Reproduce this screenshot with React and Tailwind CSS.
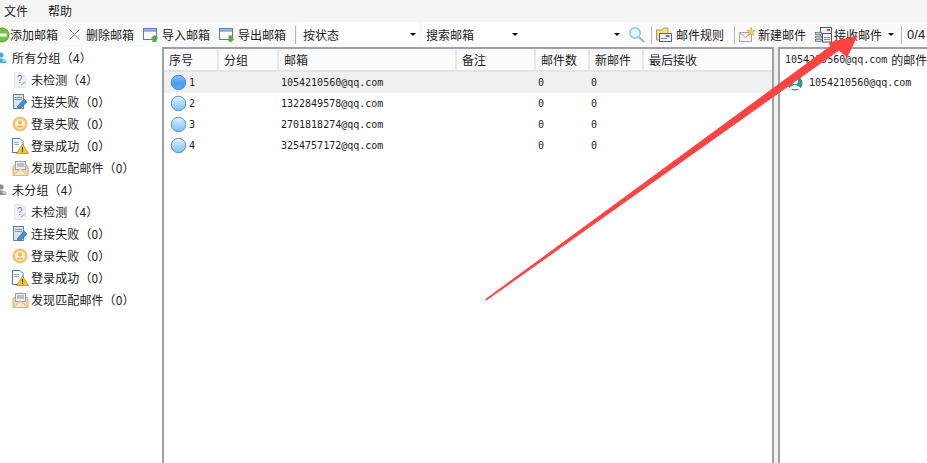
const Circle = ({ active }) => (
  <svg width="17" height="17" viewBox="0 0 17 17" className="shrink-0">
    <defs>
      <linearGradient id={active ? "ba" : "bn"} x1="0" y1="0" x2="0" y2="1">
        <stop offset="0" stopColor={active ? "#8cc4f8" : "#e6f4fd"} />
        <stop offset="0.55" stopColor={active ? "#4a9ff0" : "#a8d6f6"} />
        <stop offset="1" stopColor={active ? "#5aaaf5" : "#7cc0f0"} />
      </linearGradient>
    </defs>
    <circle cx="8.5" cy="8.5" r="7.2" fill={`url(#${active ? "ba" : "bn"})`} stroke={active ? "#3f88d8" : "#4d93cc"} strokeWidth="1" />
  </svg>
);

const IconAdd = () => (
  <svg width="16" height="16" viewBox="0 0 16 16" className="shrink-0">
    <circle cx="8" cy="8" r="7" fill="#7cc242" stroke="#5b9e2c" />
    <rect x="3.5" y="6.5" width="9" height="3" fill="#fff" />
  </svg>
);
const IconX = () => (
  <svg width="11" height="11" viewBox="0 0 11 11" className="shrink-0">
    <path d="M0.5 0.5 L10.5 10.5 M10.5 0.5 L0.5 10.5" stroke="#8a8a8a" strokeWidth="1" fill="none" />
  </svg>
);
const IconWin = ({ up }) => (
  <svg width="16" height="16" viewBox="0 0 16 16" className="shrink-0">
    <rect x="0.5" y="1.5" width="13" height="11" fill="#fff" stroke="#5a7fae" />
    <rect x="0.5" y="1.5" width="13" height="2.5" fill="#a9c4e4" stroke="#5a7fae" />
    {up ? (
      <path d="M11.5 8 L15.5 11.5 H13.5 V15 H9.5 V11.5 H7.5 Z" fill="#5fa640" />
    ) : (
      <path d="M11.5 15.5 L15.5 12 H13.5 V8.5 H9.5 V12 H7.5 Z" fill="#5fa640" />
    )}
  </svg>
);
const IconSearch = () => (
  <svg width="18" height="18" viewBox="0 0 18 18" className="shrink-0">
    <circle cx="7" cy="7" r="5.2" fill="#e4f4fc" stroke="#8ccbec" strokeWidth="1.6" />
    <path d="M11 11 L16 16" stroke="#a8b4be" strokeWidth="2.2" />
  </svg>
);
const IconRule = () => (
  <svg width="16" height="16" viewBox="0 0 16 16" className="shrink-0">
    <path d="M0.5 3 H6 L7.5 1 H12 V13 H0.5 Z" fill="#f6dc94" stroke="#b89a52" />
    <rect x="3.5" y="6.5" width="12" height="8" fill="#f4f6fa" stroke="#4a6a92" />
    <rect x="10" y="8" width="3.5" height="2" fill="#d84a3a" />
    <rect x="5" y="11" width="6" height="1" fill="#7a8ba0" />
  </svg>
);
const IconNew = () => (
  <svg width="17" height="16" viewBox="0 0 17 16" className="shrink-0">
    <rect x="0.5" y="5.5" width="12" height="9" fill="#f4f4f2" stroke="#a8a8a0" />
    <path d="M0.5 5.5 L6.5 10.5 L12.5 5.5" fill="none" stroke="#a8a8a0" />
    <path d="M12 0.5 L13.3 3.3 L16.3 3.6 L14 5.6 L14.7 8.5 L12 7 L9.3 8.5 L10 5.6 L7.7 3.6 L10.7 3.3 Z" fill="#f0cc60" stroke="#c8a040" strokeWidth="0.5" />
  </svg>
);
const IconRecv = () => (
  <svg width="17" height="16" viewBox="0 0 17 16" className="shrink-0">
    <rect x="5.5" y="0.5" width="11" height="9" fill="#eef1f6" stroke="#4a5a72" />
    <rect x="12" y="2" width="3" height="2" fill="#d84a3a" />
    <rect x="0.5" y="5.5" width="6" height="2" fill="#c8d0dc" stroke="#4a5a72" strokeWidth="0.6" />
    <rect x="0.5" y="9" width="6" height="2" fill="#c8d0dc" stroke="#4a5a72" strokeWidth="0.6" />
    <rect x="0.5" y="12.5" width="6" height="2" fill="#c8d0dc" stroke="#4a5a72" strokeWidth="0.6" />
    <rect x="7.5" y="6.5" width="9" height="8.5" fill="#f6f8fb" stroke="#4a5a72" />
    <rect x="9" y="10" width="6" height="1" fill="#7a8ba0" />
    <rect x="9" y="12" width="6" height="1" fill="#7a8ba0" />
  </svg>
);

const TUnknown = () => (
  <svg width="16" height="16" viewBox="0 0 16 16" className="shrink-0">
    <path d="M2.5 0.5 H10 L13.5 4 V15.5 H2.5 Z" fill="#f0f2f4" stroke="#e4e6e9" />
    <text x="5" y="11" fontSize="10" fontFamily="Liberation Sans" fill="#5a80c8">?</text>
    <path d="M9 13 L13 10" stroke="#b0b4b8" strokeWidth="1.2" />
  </svg>
);
const TFail = () => (
  <svg width="16" height="16" viewBox="0 0 16 16" className="shrink-0">
    <rect x="1.5" y="0.5" width="10" height="14" fill="#dbe3ea" stroke="#6c7e90" />
    <rect x="3" y="3" width="7" height="1" fill="#8697a8" />
    <rect x="3" y="5" width="7" height="1" fill="#8697a8" />
    <path d="M5 13 L12 5 L15 8 L8 15 Z" fill="#3f8fd8" stroke="#2a6aa8" strokeWidth="0.6" />
  </svg>
);
const TUser = () => (
  <svg width="16" height="16" viewBox="0 0 16 16" className="shrink-0">
    <circle cx="8" cy="8" r="7" fill="#f6c676" stroke="#f0b860" />
    <circle cx="8" cy="8" r="5" fill="#fff2d8" />
    <circle cx="8" cy="6.5" r="2" fill="#f2b450" />
    <path d="M4.5 11.5 C5 8.5 11 8.5 11.5 11.5 Z" fill="#f2b450" />
  </svg>
);
const TWarn = () => (
  <svg width="17" height="16" viewBox="0 0 17 16" className="shrink-0">
    <path d="M0.5 0.5 H8 L11 3.5 V14.5 H0.5 Z" fill="#fff" stroke="#3b78c4" />
    <rect x="2" y="4" width="5" height="1" fill="#8ab0de" />
    <rect x="2" y="6" width="5" height="1" fill="#8ab0de" />
    <path d="M10.5 6 L16.5 15.5 H4.5 Z" fill="#f6c230" stroke="#b08820" strokeWidth="0.7" />
    <rect x="10" y="9" width="1" height="3.5" fill="#333" />
    <rect x="10" y="13" width="1" height="1.2" fill="#333" />
  </svg>
);
const TMail = () => (
  <svg width="17" height="16" viewBox="0 0 17 16" className="shrink-0">
    <path d="M1 6.5 L8.5 1 L16 6.5 V15.5 H1 Z" fill="#f7d8a8" stroke="#c8a878" />
    <rect x="3.5" y="1.5" width="10" height="8" fill="#eef0f2" stroke="#9aa0a8" />
    <rect x="5" y="3.5" width="7" height="1" fill="#8a929c" />
    <rect x="5" y="5.5" width="7" height="1" fill="#8a929c" />
    <path d="M1 15.5 L8.5 9 L16 15.5 Z" fill="#fbe6c4" stroke="#d8b888" />
  </svg>
);
const GroupIcon = ({ grey }) => (
  <svg width="12" height="14" viewBox="0 0 12 14" className="shrink-0">
    <circle cx="2" cy="4" r="2.6" fill={grey ? "#8a8a8a" : "#4aa8dc"} />
    <path d="M-3 12 C-3 6 7 6 7 12 Z" fill={grey ? "#8a8a8a" : "#4aa8dc"} />
    <path d="M3 9 C5 7 8 8 8 11 H4 Z" fill={grey ? "#c8c8c8" : "#9ad4f0"} />
  </svg>
);

const TB = ({ icon, label, gap = "gap-1", ml }) => (
  <div className={`flex items-center ${gap} ${ml}`}>
    {icon}
    <span className="whitespace-nowrap">{label}</span>
  </div>
);
const Sep = ({ ml }) => <div className={`w-px h-[18px] bg-[#b8b8b8] shrink-0 ${ml}`} />;
const Caret = () => <div className="w-0 h-0 border-x-[3px] border-x-transparent border-t-[3px] border-t-[#111]" />;
const Combo = ({ box, label }) => (
  <div className={`h-[25px] bg-white flex items-center justify-between shrink-0 ${box}`}>
    <span className="whitespace-nowrap">{label}</span>
    <Caret />
  </div>
);

const children = (a) => [
  [<TUnknown />, "未检测", a],
  [<TFail />, "连接失败", 0],
  [<TUser />, "登录失败", 0],
  [<TWarn />, "登录成功", 0],
  [<TMail />, "发现匹配邮件", 0],
];

const Group = ({ name, grey }) => (
  <>
    <div className="h-[22px] flex items-center">
      <div className="w-[13px] -ml-px"><GroupIcon grey={grey} /></div>
      <span className="whitespace-nowrap tracking-[0.2px]">{name}（4）</span>
    </div>
    {children(4).map(([ic, t, n], i) => (
      <div key={i} className="h-[22px] flex items-center pl-3">
        <div className="w-[19px]">{ic}</div>
        <span className="whitespace-nowrap tracking-[0.1px]">{t}（{n}）</span>
      </div>
    ))}
  </>
);

const cols = "grid grid-cols-[55px_60px_178px_79px_54px_54px_1fr]";
const heads = ["序号", "分组", "邮箱", "备注", "邮件数", "新邮件", "最后接收"];
const rows = ["1054210560@qq.com", "1322849578@qq.com", "2701818274@qq.com", "3254757172@qq.com"];
const mono = "font-['DejaVu_Sans_Mono','Liberation_Mono',monospace] text-[10px]";

export default function App() {
  return (
    <div className="relative w-[927px] h-[463px] overflow-hidden bg-white text-[12px] leading-none text-[#1c1c1c] font-['Noto_Sans_CJK_SC','Liberation_Sans',sans-serif] flex flex-col">
      <div className="h-[22px] bg-[#f5f5f5] flex items-center pl-1 gap-[20px] shrink-0">
        <span>文件</span>
        <span>帮助</span>
      </div>
      <div className="h-[25px] bg-[#fafafa] flex items-center shrink-0">
        <TB ml="-ml-1.5" gap="gap-0" icon={<IconAdd />} label="添加邮箱" />
        <TB ml="ml-[11px]" gap="gap-1.5" icon={<IconX />} label="删除邮箱" />
        <TB ml="ml-[9px]" gap="gap-[3px]" icon={<IconWin up />} label="导入邮箱" />
        <TB ml="ml-[9px]" gap="gap-[3px]" icon={<IconWin />} label="导出邮箱" />
        <Sep ml="ml-[9px]" />
        <Combo box="w-[122px] ml-[1px] pl-[6px] pr-[3px]" label="按状态" />
        <Combo box="w-[102px] ml-[3px] pl-[4px] pr-[6px]" label="搜索邮箱" />
        <Combo box="w-[100px] pr-[4px]" label="" />
        <div className="ml-[4px]"><IconSearch /></div>
        <Sep ml="ml-[5px]" />
        <TB ml="ml-[4px]" icon={<IconRule />} label="邮件规则" />
        <Sep ml="ml-[10px]" />
        <TB ml="ml-[4px]" gap="gap-[2px]" icon={<IconNew />} label="新建邮件" />
        <TB ml="ml-[9px]" gap="gap-[2px]" icon={<IconRecv />} label="接收邮件" />
        <div className="ml-[6px]"><Caret /></div>
        <Sep ml="ml-[7px]" />
        <span className="ml-[5px] font-['Liberation_Sans',sans-serif] text-[13px] whitespace-nowrap">0/4</span>
      </div>
      <div className="flex-1 flex min-h-0">
        <div className="w-[162px] shrink-0">
          <Group name="所有分组" />
          <Group name="未分组" grey />
        </div>
        <div className="w-[612px] shrink-0 border-l-2 border-t-2 border-r-2 border-[#a0a0a8] bg-white">
          <div className={`${cols} h-[23px] border-b-2 border-[#e4e4e4] bg-[#fbfbfb]`}>
            {heads.map((h, i) => (
              <div key={i} className="flex items-center pl-[5px] border-r-[2px] border-[#e8e8e8] last:border-r-0">{h}</div>
            ))}
          </div>
          {rows.map((r, i) => (
            <div key={i} className={`${cols} h-[21px] items-center ${i === 0 ? "bg-[#f0f0f0]" : ""}`}>
              <div className="flex items-center pl-[6px] gap-[2px]">
                <Circle active={i === 0} />
                <span className={mono}>{i + 1}</span>
              </div>
              <div />
              <div className={`pl-[2px] ${mono}`}>{r}</div>
              <div />
              <div className={`pl-[2px] ${mono}`}>0</div>
              <div className={`pl-[1px] ${mono}`}>0</div>
              <div />
            </div>
          ))}
        </div>
        <div className="w-[4px] shrink-0 bg-[#f0f0f0]" />
        <div className="w-[149px] shrink-0 border-l-2 border-t-2 border-[#a0a0a8] overflow-hidden">
          <div className="h-[19px] flex items-center pl-[5px] whitespace-nowrap mt-[1px]">
            <span className={mono}>1054210560@qq.com</span>
            <span className="ml-[4px] w-[37px] shrink-0">的邮件</span>
          </div>
          <div className="flex items-center pl-[7px] mt-[5px] gap-[6px] h-[18px]">
            <svg width="16" height="16" viewBox="0 0 16 16" className="shrink-0">
              <circle cx="8" cy="8" r="7.5" fill="#2e9c8c" />
              <circle cx="8" cy="6.2" r="3" fill="#fff" />
              <path d="M2.5 14 C3.5 9 12.5 9 13.5 14 Z" fill="#fff" />
            </svg>
            <span className={`${mono} whitespace-nowrap`}>1054210560@qq.com</span>
          </div>
        </div>
      </div>
      <svg className="absolute left-0 top-0 pointer-events-none" width="927" height="463" viewBox="0 0 927 463">
        <path d="M485.5 299.5 L831 46 L829 43 L857 36 L847 57 L839 50 L486.5 300 Z" fill="#ff4242" stroke="#ff4242" strokeWidth="1" strokeLinejoin="round" />
      </svg>
    </div>
  );
}
